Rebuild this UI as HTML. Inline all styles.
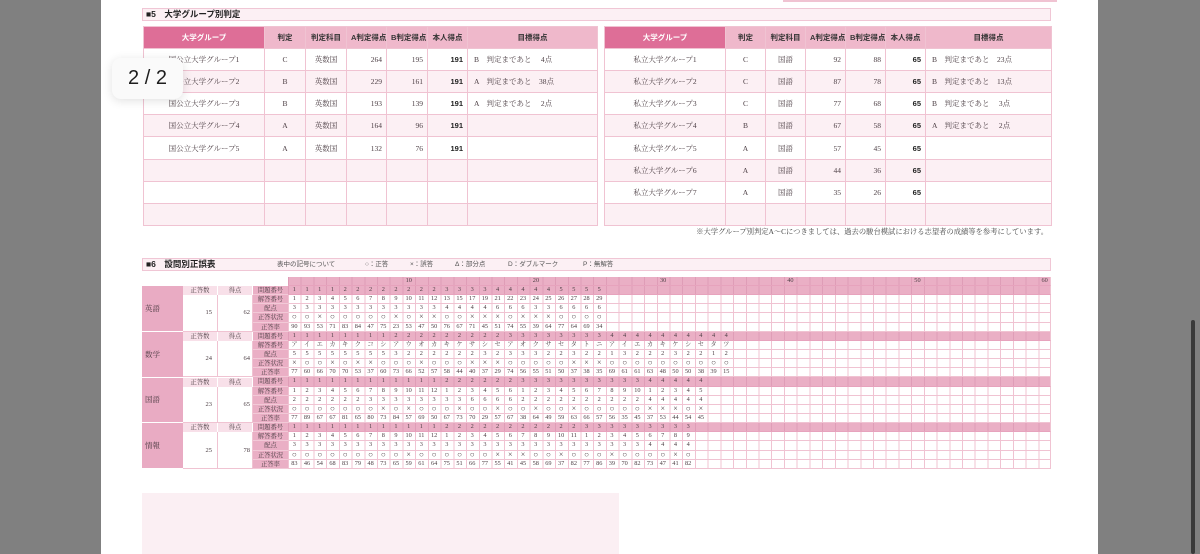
<!DOCTYPE html>
<html><head><meta charset="utf-8">
<style>
*{margin:0;padding:0;box-sizing:border-box}
body{width:1200px;height:554px;overflow:hidden;background:#808080;position:relative;font-family:"Liberation Serif","Noto Serif CJK SC",serif;color:#4e4046}
i{font-style:normal}
.page{position:absolute;left:101px;top:0;width:997px;height:554px;background:#fff}
.bar{position:absolute;left:142px;width:909px;height:13px;background:#fcf0f4;border:1px solid #f0c6d5;font-size:8.5px;font-weight:bold;color:#222;line-height:11px;padding-left:3px;font-family:"Liberation Sans","Noto Sans CJK JP",sans-serif}
table{position:absolute;border-collapse:collapse;table-layout:fixed;font-size:7.5px}
td,th{border:1px solid #f0c3d2;height:22.1px;padding:0 4px;white-space:nowrap}
th{background:#efb8cb;color:#333;font-weight:bold;font-size:7.5px;font-family:"Liberation Sans","Noto Sans CJK JP",sans-serif}
th.f{background:#de6e97;color:#fff}
tr:nth-child(odd) td{background:#fcf0f4}
td.c{text-align:center}td.n{text-align:right}td.b{text-align:right;font-weight:bold;color:#222;font-family:"Liberation Sans",sans-serif}
td.t{padding-left:6px}
.g{position:absolute;left:288px;top:277px;width:763px;font-size:6.3px;color:#4e4046}
.gr{display:flex;height:9.15px;line-height:8.6px;border-bottom:1px solid #f0c3d2;border-right:1px solid #f0c3d2;background-color:#fff;background-image:repeating-linear-gradient(90deg,#f0c3d2 0 1px,transparent 1px 12.7167px)}
.gr.p{background-color:#eaafc5;background-image:repeating-linear-gradient(90deg,#df9db7 0 1px,transparent 1px 12.7167px);border-bottom-color:#e7a3bd}
.gr i{width:12.7167px;flex:none;text-align:center}
.gr.s{font-size:8px;line-height:8.4px}
.gr.h{position:relative;height:9px}
.gr.h i{position:absolute;top:0;width:12.7167px;text-align:center}
.sub{position:absolute;left:142px;width:41px;height:45.75px;background:#e9abc3;color:#4a3a40;font-size:7.5px;padding-left:3px;border-bottom:1px solid #fff;display:flex;align-items:center}
.lab{position:absolute;left:183px;width:70px;height:9.15px;background:#f8e0e9;font-size:6.3px;display:flex;line-height:9px}
.lab i{width:35px;text-align:center;border-right:1px solid #fff}
.val{position:absolute;width:35px;height:36.6px;border-right:1px solid #f0c3d2;border-bottom:1px solid #f0c3d2;font-size:6.5px;text-align:right;display:flex;align-items:center;justify-content:flex-end}
.lc{position:absolute;left:253px;width:35px;background:#eaafc5;font-size:6.3px;text-align:center}
.lc i{display:block;height:9.15px;line-height:9px;border-bottom:1px solid #f2c9d7}
</style></head><body>
<div class="page"></div>
<div style="position:absolute;left:783px;top:0;width:274px;height:2px;background:#f0c3d2"></div>

<div class="bar" style="top:8px">■5　大学グループ別判定</div>

<table style="left:143px;top:26px;width:454px">
<colgroup><col style="width:121px"><col style="width:41px"><col style="width:41px"><col style="width:40px"><col style="width:41px"><col style="width:40px"><col style="width:130px"></colgroup>
<tr><th class="f">大学グループ</th><th>判定</th><th>判定科目</th><th>A判定得点</th><th>B判定得点</th><th>本人得点</th><th>目標得点</th></tr>
<tr><td class="c">国公立大学グループ1</td><td class="c">C</td><td class="c">英数国</td><td class="n">264</td><td class="n">195</td><td class="b">191</td><td class="t">B　判定まであと　 4点</td></tr>
<tr><td class="c">国公立大学グループ2</td><td class="c">B</td><td class="c">英数国</td><td class="n">229</td><td class="n">161</td><td class="b">191</td><td class="t">A　判定まであと　38点</td></tr>
<tr><td class="c">国公立大学グループ3</td><td class="c">B</td><td class="c">英数国</td><td class="n">193</td><td class="n">139</td><td class="b">191</td><td class="t">A　判定まであと　 2点</td></tr>
<tr><td class="c">国公立大学グループ4</td><td class="c">A</td><td class="c">英数国</td><td class="n">164</td><td class="n">96</td><td class="b">191</td><td></td></tr>
<tr><td class="c">国公立大学グループ5</td><td class="c">A</td><td class="c">英数国</td><td class="n">132</td><td class="n">76</td><td class="b">191</td><td></td></tr>
<tr><td></td><td></td><td></td><td></td><td></td><td></td><td></td></tr>
<tr><td></td><td></td><td></td><td></td><td></td><td></td><td></td></tr>
<tr><td></td><td></td><td></td><td></td><td></td><td></td><td></td></tr>
</table>

<table style="left:604px;top:26px;width:447px">
<colgroup><col style="width:121px"><col style="width:40px"><col style="width:40px"><col style="width:40px"><col style="width:40px"><col style="width:40px"><col style="width:126px"></colgroup>
<tr><th class="f">大学グループ</th><th>判定</th><th>判定科目</th><th>A判定得点</th><th>B判定得点</th><th>本人得点</th><th>目標得点</th></tr>
<tr><td class="c">私立大学グループ1</td><td class="c">C</td><td class="c">国語</td><td class="n">92</td><td class="n">88</td><td class="b">65</td><td class="t">B　判定まであと　23点</td></tr>
<tr><td class="c">私立大学グループ2</td><td class="c">C</td><td class="c">国語</td><td class="n">87</td><td class="n">78</td><td class="b">65</td><td class="t">B　判定まであと　13点</td></tr>
<tr><td class="c">私立大学グループ3</td><td class="c">C</td><td class="c">国語</td><td class="n">77</td><td class="n">68</td><td class="b">65</td><td class="t">B　判定まであと　 3点</td></tr>
<tr><td class="c">私立大学グループ4</td><td class="c">B</td><td class="c">国語</td><td class="n">67</td><td class="n">58</td><td class="b">65</td><td class="t">A　判定まであと　 2点</td></tr>
<tr><td class="c">私立大学グループ5</td><td class="c">A</td><td class="c">国語</td><td class="n">57</td><td class="n">45</td><td class="b">65</td><td></td></tr>
<tr><td class="c">私立大学グループ6</td><td class="c">A</td><td class="c">国語</td><td class="n">44</td><td class="n">36</td><td class="b">65</td><td></td></tr>
<tr><td class="c">私立大学グループ7</td><td class="c">A</td><td class="c">国語</td><td class="n">35</td><td class="n">26</td><td class="b">65</td><td></td></tr>
<tr><td></td><td></td><td></td><td></td><td></td><td></td><td></td></tr>
</table>

<div style="position:absolute;right:152px;top:227px;font-size:7.3px;color:#444">※大学グループ別判定A～Cにつきましては、過去の駿台模試における志望者の成績等を参考にしています。</div>

<div class="bar" style="top:258px">■6　設問別正誤表
<span style="position:absolute;left:134px;top:0;font-weight:normal;font-size:6.5px;color:#555">表中の記号について</span>
<span style="position:absolute;left:222px;top:0;font-weight:normal;font-size:6.5px;color:#555">○：正答</span>
<span style="position:absolute;left:267px;top:0;font-weight:normal;font-size:6.5px;color:#555">×：誤答</span>
<span style="position:absolute;left:312px;top:0;font-weight:normal;font-size:6.5px;color:#555">Δ：部分点</span>
<span style="position:absolute;left:365px;top:0;font-weight:normal;font-size:6.5px;color:#555">D：ダブルマーク</span>
<span style="position:absolute;left:440px;top:0;font-weight:normal;font-size:6.5px;color:#555">P：無解答</span>
</div>

<div class="sub" style="top:286px">英語</div>
<div class="sub" style="top:331.75px">数学</div>
<div class="sub" style="top:377.5px">国語</div>
<div class="sub" style="top:423.25px">情報</div>
<div class="lab" style="top:286px"><i>正答数</i><i>得点</i></div>
<div class="lab" style="top:331.75px"><i>正答数</i><i>得点</i></div>
<div class="lab" style="top:377.5px"><i>正答数</i><i>得点</i></div>
<div class="lab" style="top:423.25px"><i>正答数</i><i>得点</i></div>
<div class="val" style="left:183px;top:295.15px;padding-right:5px">15</div><div class="val" style="left:218px;top:295.15px;padding-right:2px">62</div>
<div class="val" style="left:183px;top:340.9px;padding-right:5px">24</div><div class="val" style="left:218px;top:340.9px;padding-right:2px">64</div>
<div class="val" style="left:183px;top:386.65px;padding-right:5px">23</div><div class="val" style="left:218px;top:386.65px;padding-right:2px">65</div>
<div class="val" style="left:183px;top:432.4px;padding-right:5px">25</div><div class="val" style="left:218px;top:432.4px;padding-right:2px">78</div>
<div class="lc" style="top:286px"><i>問題番号</i><i>解答番号</i><i>配点</i><i>正答状況</i><i>正答率</i><i>問題番号</i><i>解答番号</i><i>配点</i><i>正答状況</i><i>正答率</i><i>問題番号</i><i>解答番号</i><i>配点</i><i>正答状況</i><i>正答率</i><i>問題番号</i><i>解答番号</i><i>配点</i><i>正答状況</i><i>正答率</i></div>

<div class="g">
<div class="gr p h"><i style="left:114.45px">10</i><i style="left:241.6px">20</i><i style="left:368.8px">30</i><i style="left:496px">40</i><i style="left:623.1px">50</i><i style="left:750.3px">60</i></div>
<div class="gr p"><i>1</i><i>1</i><i>1</i><i>1</i><i>2</i><i>2</i><i>2</i><i>2</i><i>2</i><i>2</i><i>2</i><i>2</i><i>3</i><i>3</i><i>3</i><i>3</i><i>4</i><i>4</i><i>4</i><i>4</i><i>4</i><i>5</i><i>5</i><i>5</i><i>5</i></div>
<div class="gr"><i>1</i><i>2</i><i>3</i><i>4</i><i>5</i><i>6</i><i>7</i><i>8</i><i>9</i><i>10</i><i>11</i><i>12</i><i>13</i><i>15</i><i>17</i><i>19</i><i>21</i><i>22</i><i>23</i><i>24</i><i>25</i><i>26</i><i>27</i><i>28</i><i>29</i></div>
<div class="gr"><i>3</i><i>3</i><i>3</i><i>3</i><i>3</i><i>3</i><i>3</i><i>3</i><i>3</i><i>3</i><i>3</i><i>3</i><i>4</i><i>4</i><i>4</i><i>4</i><i>6</i><i>6</i><i>6</i><i>3</i><i>3</i><i>6</i><i>6</i><i>6</i><i>6</i></div>
<div class="gr s"><i>○</i><i>○</i><i>×</i><i>○</i><i>○</i><i>○</i><i>○</i><i>○</i><i>×</i><i>○</i><i>×</i><i>×</i><i>○</i><i>○</i><i>×</i><i>×</i><i>×</i><i>○</i><i>×</i><i>×</i><i>×</i><i>○</i><i>○</i><i>○</i><i>○</i></div>
<div class="gr"><i>90</i><i>93</i><i>53</i><i>71</i><i>83</i><i>84</i><i>47</i><i>75</i><i>23</i><i>53</i><i>47</i><i>50</i><i>76</i><i>67</i><i>71</i><i>45</i><i>51</i><i>74</i><i>55</i><i>39</i><i>64</i><i>77</i><i>64</i><i>69</i><i>34</i></div>
<div class="gr p"><i>1</i><i>1</i><i>1</i><i>1</i><i>1</i><i>1</i><i>1</i><i>1</i><i>2</i><i>2</i><i>2</i><i>2</i><i>2</i><i>2</i><i>2</i><i>2</i><i>2</i><i>3</i><i>3</i><i>3</i><i>3</i><i>3</i><i>3</i><i>3</i><i>3</i><i>4</i><i>4</i><i>4</i><i>4</i><i>4</i><i>4</i><i>4</i><i>4</i><i>4</i><i>4</i></div>
<div class="gr"><i>ア</i><i>イ</i><i>エ</i><i>カ</i><i>キ</i><i>ク</i><i>コ</i><i>シ</i><i>ア</i><i>ウ</i><i>オ</i><i>カ</i><i>キ</i><i>ケ</i><i>サ</i><i>シ</i><i>セ</i><i>ア</i><i>オ</i><i>ク</i><i>サ</i><i>セ</i><i>タ</i><i>ト</i><i>ニ</i><i>ア</i><i>イ</i><i>エ</i><i>カ</i><i>キ</i><i>ケ</i><i>シ</i><i>セ</i><i>タ</i><i>ツ</i></div>
<div class="gr"><i>5</i><i>5</i><i>5</i><i>5</i><i>5</i><i>5</i><i>5</i><i>5</i><i>3</i><i>2</i><i>2</i><i>2</i><i>2</i><i>2</i><i>2</i><i>3</i><i>2</i><i>3</i><i>3</i><i>3</i><i>2</i><i>2</i><i>3</i><i>2</i><i>2</i><i>1</i><i>3</i><i>2</i><i>2</i><i>2</i><i>3</i><i>2</i><i>2</i><i>1</i><i>2</i></div>
<div class="gr s"><i>×</i><i>○</i><i>○</i><i>×</i><i>○</i><i>×</i><i>×</i><i>○</i><i>○</i><i>○</i><i>×</i><i>○</i><i>○</i><i>○</i><i>×</i><i>×</i><i>×</i><i>○</i><i>○</i><i>○</i><i>○</i><i>○</i><i>×</i><i>×</i><i>×</i><i>○</i><i>○</i><i>○</i><i>○</i><i>○</i><i>○</i><i>○</i><i>○</i><i>○</i><i>○</i></div>
<div class="gr"><i>77</i><i>60</i><i>66</i><i>70</i><i>70</i><i>53</i><i>37</i><i>60</i><i>73</i><i>66</i><i>52</i><i>57</i><i>58</i><i>44</i><i>40</i><i>37</i><i>29</i><i>74</i><i>56</i><i>55</i><i>51</i><i>50</i><i>37</i><i>38</i><i>35</i><i>69</i><i>61</i><i>61</i><i>63</i><i>48</i><i>50</i><i>50</i><i>38</i><i>39</i><i>15</i></div>
<div class="gr p"><i>1</i><i>1</i><i>1</i><i>1</i><i>1</i><i>1</i><i>1</i><i>1</i><i>1</i><i>1</i><i>1</i><i>1</i><i>2</i><i>2</i><i>2</i><i>2</i><i>2</i><i>2</i><i>3</i><i>3</i><i>3</i><i>3</i><i>3</i><i>3</i><i>3</i><i>3</i><i>3</i><i>3</i><i>4</i><i>4</i><i>4</i><i>4</i><i>4</i></div>
<div class="gr"><i>1</i><i>2</i><i>3</i><i>4</i><i>5</i><i>6</i><i>7</i><i>8</i><i>9</i><i>10</i><i>11</i><i>12</i><i>1</i><i>2</i><i>3</i><i>4</i><i>5</i><i>6</i><i>1</i><i>2</i><i>3</i><i>4</i><i>5</i><i>6</i><i>7</i><i>8</i><i>9</i><i>10</i><i>1</i><i>2</i><i>3</i><i>4</i><i>5</i></div>
<div class="gr"><i>2</i><i>2</i><i>2</i><i>2</i><i>2</i><i>2</i><i>3</i><i>3</i><i>3</i><i>3</i><i>3</i><i>3</i><i>3</i><i>3</i><i>6</i><i>6</i><i>6</i><i>6</i><i>2</i><i>2</i><i>2</i><i>2</i><i>2</i><i>2</i><i>2</i><i>2</i><i>2</i><i>2</i><i>4</i><i>4</i><i>4</i><i>4</i><i>4</i></div>
<div class="gr s"><i>○</i><i>○</i><i>○</i><i>○</i><i>○</i><i>○</i><i>○</i><i>×</i><i>○</i><i>×</i><i>○</i><i>○</i><i>○</i><i>×</i><i>○</i><i>○</i><i>×</i><i>○</i><i>○</i><i>×</i><i>○</i><i>○</i><i>×</i><i>○</i><i>○</i><i>○</i><i>○</i><i>○</i><i>×</i><i>×</i><i>×</i><i>○</i><i>×</i></div>
<div class="gr"><i>77</i><i>89</i><i>67</i><i>67</i><i>81</i><i>65</i><i>80</i><i>73</i><i>84</i><i>57</i><i>69</i><i>50</i><i>67</i><i>73</i><i>70</i><i>29</i><i>57</i><i>67</i><i>38</i><i>64</i><i>49</i><i>59</i><i>63</i><i>66</i><i>57</i><i>56</i><i>35</i><i>45</i><i>37</i><i>53</i><i>44</i><i>54</i><i>45</i></div>
<div class="gr p"><i>1</i><i>1</i><i>1</i><i>1</i><i>1</i><i>1</i><i>1</i><i>1</i><i>1</i><i>1</i><i>1</i><i>1</i><i>2</i><i>2</i><i>2</i><i>2</i><i>2</i><i>2</i><i>2</i><i>2</i><i>2</i><i>2</i><i>2</i><i>3</i><i>3</i><i>3</i><i>3</i><i>3</i><i>3</i><i>3</i><i>3</i><i>3</i></div>
<div class="gr"><i>1</i><i>2</i><i>3</i><i>4</i><i>5</i><i>6</i><i>7</i><i>8</i><i>9</i><i>10</i><i>11</i><i>12</i><i>1</i><i>2</i><i>3</i><i>4</i><i>5</i><i>6</i><i>7</i><i>8</i><i>9</i><i>10</i><i>11</i><i>1</i><i>2</i><i>3</i><i>4</i><i>5</i><i>6</i><i>7</i><i>8</i><i>9</i></div>
<div class="gr"><i>3</i><i>3</i><i>3</i><i>3</i><i>3</i><i>3</i><i>3</i><i>3</i><i>3</i><i>3</i><i>3</i><i>3</i><i>3</i><i>3</i><i>3</i><i>3</i><i>3</i><i>3</i><i>3</i><i>3</i><i>3</i><i>3</i><i>3</i><i>3</i><i>3</i><i>3</i><i>3</i><i>3</i><i>4</i><i>4</i><i>4</i><i>4</i></div>
<div class="gr s"><i>○</i><i>○</i><i>○</i><i>○</i><i>○</i><i>○</i><i>○</i><i>○</i><i>○</i><i>×</i><i>○</i><i>○</i><i>○</i><i>○</i><i>○</i><i>○</i><i>×</i><i>×</i><i>×</i><i>○</i><i>○</i><i>×</i><i>○</i><i>○</i><i>○</i><i>×</i><i>○</i><i>○</i><i>○</i><i>○</i><i>×</i><i>○</i></div>
<div class="gr"><i>83</i><i>46</i><i>54</i><i>68</i><i>83</i><i>79</i><i>48</i><i>73</i><i>65</i><i>59</i><i>61</i><i>64</i><i>75</i><i>51</i><i>66</i><i>77</i><i>55</i><i>41</i><i>45</i><i>58</i><i>69</i><i>37</i><i>82</i><i>77</i><i>86</i><i>39</i><i>70</i><i>82</i><i>73</i><i>47</i><i>41</i><i>82</i></div>
</div>

<div style="position:absolute;left:142px;top:493px;width:477px;height:61px;background:#fbeff3"></div>

<div style="position:absolute;left:112px;top:58px;width:71px;height:41px;background:#fafafa;border-radius:9px;box-shadow:0 2px 10px rgba(0,0,0,0.12);font-family:'Liberation Sans',sans-serif;font-size:20px;color:#1e1e1e;text-align:center;line-height:41px">2 / 2</div>

<div style="position:absolute;left:1191px;top:320px;width:4px;height:234px;background:#3a3a3a;border-radius:2px"></div>
</body></html>
